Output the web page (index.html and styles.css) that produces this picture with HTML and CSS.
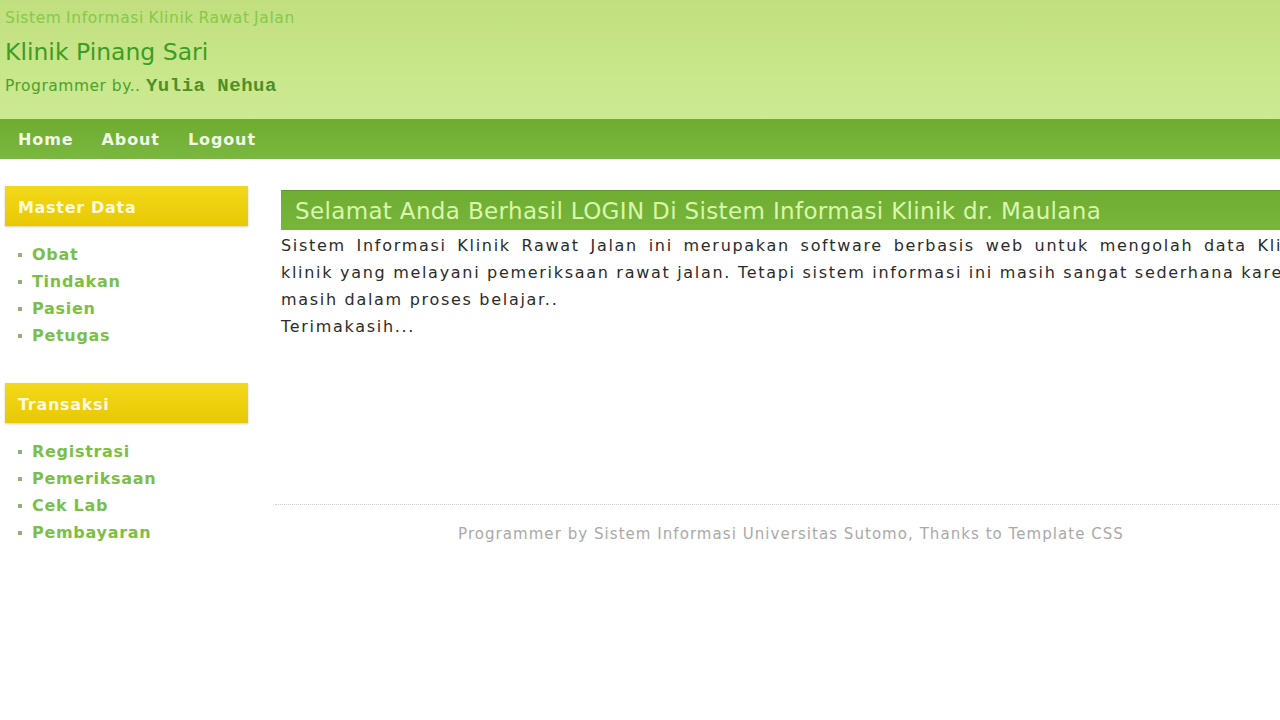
FILE: index.html
```html
<!DOCTYPE html>
<html lang="id">
<head>
<meta charset="utf-8">
<title>Klinik Pinang Sari</title>
<link rel="stylesheet" href="styles.css">
</head>
<body>
<div class="page">
  <header class="header">
    <div class="tagline">Sistem Informasi Klinik Rawat Jalan</div>
    <div class="site-name">Klinik Pinang Sari</div>
    <div class="credit">Programmer by.. <span class="author">Yulia Nehua</span></div>
  </header>
  <nav class="nav">
    <a class="nav-link" href="#">Home</a>
    <a class="nav-link" href="#">About</a>
    <a class="nav-link" href="#">Logout</a>
  </nav>
  <div class="main">
    <aside class="sidebar">
      <div class="side-box">
        <div class="side-title">Master Data</div>
        <ul class="side-list">
          <li><a href="#">Obat</a></li>
          <li><a href="#">Tindakan</a></li>
          <li><a href="#">Pasien</a></li>
          <li><a href="#">Petugas</a></li>
        </ul>
      </div>
      <div class="side-box">
        <div class="side-title">Transaksi</div>
        <ul class="side-list">
          <li><a href="#">Registrasi</a></li>
          <li><a href="#">Pemeriksaan</a></li>
          <li><a href="#">Cek Lab</a></li>
          <li><a href="#">Pembayaran</a></li>
        </ul>
      </div>
    </aside>
    <section class="content">
      <h1 class="content-title">Selamat Anda Berhasil LOGIN Di Sistem Informasi Klinik dr. Maulana</h1>
      <p class="intro">
        <span class="line">Sistem Informasi Klinik Rawat Jalan ini merupakan software berbasis web untuk mengolah data Klinik</span>
        <span class="line line-natural">klinik yang melayani pemeriksaan rawat jalan. Tetapi sistem informasi ini masih sangat sederhana karena</span>
        <span class="last">masih dalam proses belajar..</span>
        <span class="last">Terimakasih...</span>
      </p>
      <footer class="footer">Programmer by Sistem Informasi Universitas Sutomo, Thanks to Template CSS</footer>
    </section>
  </div>
</div>
</body>
</html>
```
FILE: styles.css
```css
html, body {
  margin: 0;
  padding: 0;
  background: #ffffff;
  overflow: hidden;
}
body {
  font-family: "DejaVu Sans", Verdana, sans-serif;
}
.page {
  width: 1280px;
  height: 720px;
  overflow: hidden;
}
.header {
  height: 119px;
  box-sizing: border-box;
  padding: 8px 0 0 5px;
  background: linear-gradient(180deg, #c1df7e 0%, #c8e78b 60%, #cde993 100%);
}
.tagline {
  font-size: 15.5px;
  color: #86c94a;
  letter-spacing: 0.6px;
  line-height: 20px;
  word-spacing: -1px;
}
.site-name {
  font-size: 23.5px;
  color: #3f9c22;
  letter-spacing: 0;
  margin-top: 9px;
  line-height: 30px;
}
.credit {
  font-size: 15.5px;
  color: #4da12a;
  letter-spacing: 0.5px;
  margin-top: 7px;
  line-height: 24px;
}
.author {
  font-family: "Liberation Mono", "DejaVu Sans Mono", monospace;
  font-weight: bold;
  font-size: 19px;
  letter-spacing: 0.5px;
  color: #4f8f25;
}
.nav {
  height: 40px;
  display: flex;
  align-items: center;
  gap: 28px;
  padding-left: 18px;
  background: linear-gradient(180deg, #6ead30 0%, #79b73f 100%);
}
.nav-link {
  color: #f3f8e6;
  font-weight: bold;
  font-size: 16px;
  text-decoration: none;
  letter-spacing: 0.9px;
}
.main {
  display: flex;
  align-items: flex-start;
  padding-top: 27px;
}
.sidebar {
  width: 243px;
  margin-left: 5px;
  flex: none;
}
.side-box {
  margin-bottom: 34px;
}
.side-title {
  height: 40px;
  box-sizing: border-box;
  padding-left: 13px;
  padding-top: 2px;
  display: flex;
  align-items: center;
  background: linear-gradient(180deg, #f3d91b 0%, #e8c803 100%);
  box-shadow: 0 1px 2px rgba(150, 120, 0, 0.35);
  color: #fdf8df;
  font-weight: bold;
  font-size: 16px;
  letter-spacing: 0.7px;
}
.side-list {
  list-style: none;
  margin: 15px 0 0 0;
  padding: 0 0 0 13px;
}
.side-list li {
  height: 27px;
  display: flex;
  align-items: center;
}
.side-list li::before {
  content: "";
  width: 4px;
  height: 4px;
  background: #8fb17a;
  margin-right: 10px;
  margin-left: 0;
}
.side-list a {
  color: #7cbf47;
  font-weight: bold;
  font-size: 16px;
  text-decoration: none;
  letter-spacing: 0.7px;
}
.content {
  margin-left: 33px;
  width: 1030px;
  flex: none;
  padding-top: 4px;
}
.content-title {
  margin: 0;
  height: 40px;
  box-sizing: border-box;
  border-top: 1px solid #5f9a2e;
  padding-left: 14px;
  display: flex;
  align-items: center;
  background: linear-gradient(180deg, #6fae32 0%, #77b53b 100%);
  color: #d9f7ad;
  font-weight: normal;
  font-size: 23px;
  letter-spacing: 0.35px;
  white-space: nowrap;
}
.intro {
  margin: 2px 0 0 0;
  font-size: 16px;
  line-height: 27px;
  color: #2b2b2b;
  letter-spacing: 1.7px;
}
.intro .line {
  display: block;
  text-align: justify;
  text-align-last: justify;
  white-space: nowrap;
}
.intro .line-natural {
  text-align: left;
  text-align-last: auto;
}
.intro .last {
  display: block;
}
.footer {
  width: 1032px;
  margin: 164px 0 0 -6px;
  border-top: 1px dotted #d0d0d0;
  padding-top: 20px;
  text-align: center;
  color: #a9a9a9;
  font-size: 15px;
  letter-spacing: 1.05px;
}
```
